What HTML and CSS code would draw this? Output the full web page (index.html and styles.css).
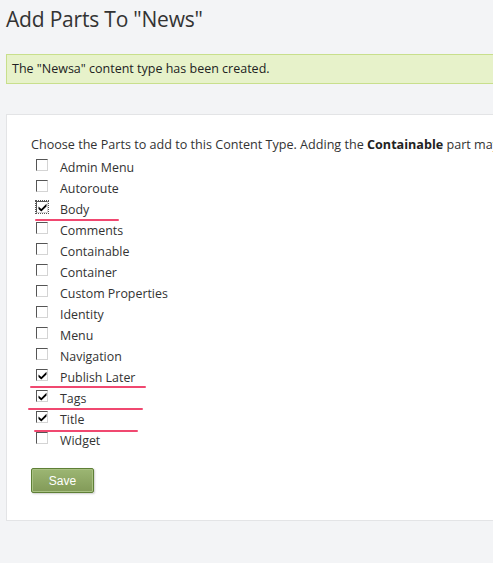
FILE: index.html
```html
<!DOCTYPE html>
<html>
<head>
<meta charset="utf-8">
<link rel="stylesheet" href="styles.css">
</head>
<body>
<div class="page">
  <h1 class="title">Add Parts To "News"</h1>
  <div class="message">The "Newsa" content type has been created.</div>
  <div class="panel">
    <p class="intro">Choose the Parts to add to this Content Type. Adding the <b>Containable</b> part may allow items to be contained.</p>
    <ul class="parts">
      <li class="part"><span class="cb"></span><span class="lbl">Admin Menu</span></li>
      <li class="part"><span class="cb"></span><span class="lbl">Autoroute</span></li>
      <li class="part"><span class="cb checked focus"><svg viewBox="0 0 9 9" class="tick"><path d="M0.5 3.5 L3.3 6 L8.5 0.8 L8.5 3.6 L3.3 8.6 L0.5 6 Z" fill="#000"/></svg></span><span class="lbl">Body</span><span class="mark m-body"></span></li>
      <li class="part"><span class="cb"></span><span class="lbl">Comments</span></li>
      <li class="part"><span class="cb"></span><span class="lbl">Containable</span></li>
      <li class="part"><span class="cb"></span><span class="lbl">Container</span></li>
      <li class="part"><span class="cb"></span><span class="lbl">Custom Properties</span></li>
      <li class="part"><span class="cb"></span><span class="lbl">Identity</span></li>
      <li class="part"><span class="cb"></span><span class="lbl">Menu</span></li>
      <li class="part"><span class="cb"></span><span class="lbl">Navigation</span></li>
      <li class="part"><span class="cb checked"><svg viewBox="0 0 9 9" class="tick"><path d="M0.5 3.5 L3.3 6 L8.5 0.8 L8.5 3.6 L3.3 8.6 L0.5 6 Z" fill="#000"/></svg></span><span class="lbl">Publish Later</span><span class="mark m-publish"></span></li>
      <li class="part"><span class="cb checked"><svg viewBox="0 0 9 9" class="tick"><path d="M0.5 3.5 L3.3 6 L8.5 0.8 L8.5 3.6 L3.3 8.6 L0.5 6 Z" fill="#000"/></svg></span><span class="lbl">Tags</span><span class="mark m-tags"></span></li>
      <li class="part"><span class="cb checked"><svg viewBox="0 0 9 9" class="tick"><path d="M0.5 3.5 L3.3 6 L8.5 0.8 L8.5 3.6 L3.3 8.6 L0.5 6 Z" fill="#000"/></svg></span><span class="lbl">Title</span><span class="mark m-title"></span></li>
      <li class="part"><span class="cb"></span><span class="lbl">Widget</span></li>
    </ul>
    <button class="save">Save</button>
  </div>
</div>
</body>
</html>
```
FILE: styles.css
```css
html, body {
  margin: 0;
  padding: 0;
  background: #f3f4f6;
  overflow: hidden;
}
body {
  font-family: "Open Sans", "Noto Sans", sans-serif;
  color: #333;
  width: 493px;
  height: 563px;
}
.page {
  padding: 0 0 0 6px;
  width: 487px;
}
.title {
  margin: 0;
  padding-top: 4px;
  height: 50px;
  font-weight: normal;
  font-size: 21px;
  line-height: 30px;
  color: #333;
  letter-spacing: -0.2px;
}
.message {
  box-sizing: border-box;
  height: 30px;
  border: 1px solid #c8df8c;
  border-right: none;
  background: #e7f2ca;
  font-size: 12.5px;
  line-height: 28px;
  padding-left: 5px;
  color: #222;
}
.panel {
  margin-top: 30px;
  box-sizing: border-box;
  height: 407px;
  background: #fff;
  border: 1px solid #e3e4e6;
  border-right: none;
  padding: 21px 0 0 24px;
  overflow: hidden;
}
.intro {
  margin: 0;
  font-size: 12.6px;
  line-height: 18px;
  white-space: nowrap;
  color: #333;
}
.intro b { color: #222; }
.parts {
  list-style: none;
  margin: 3px 0 0 0;
  padding: 0;
}
.part {
  position: relative;
  display: flex;
  align-items: center;
  height: 21px;
  font-size: 12.4px;
}
.cb {
  box-sizing: border-box;
  width: 12px;
  height: 12px;
  margin: -5px 0 0 5px;
  border-top: 1px solid #555;
  border-left: 1px solid #555;
  border-right: 1px solid #d4d4d4;
  border-bottom: 1px solid #d4d4d4;
  background: #fff;
  display: flex;
  align-items: center;
  justify-content: center;
}
.cb.focus { outline: 1px dotted #555; outline-offset: 0; }
.tick { width: 9px; height: 9px; }
.lbl {
  margin-left: 12px;
  color: #333;
}
.mark {
  position: absolute;
  height: 2px;
  background: #f04870;
  border-radius: 1px;
  top: 19px;
}
.m-body { left: 4px; width: 84px; top: 20px; }
.m-publish { left: -1px; width: 116px; top: 19px; }
.m-tags { left: -3px; width: 115px; top: 20px; }
.m-title { left: 3px; width: 104px; top: 21px; }
.save {
  margin-top: 17px;
  width: 63px;
  height: 25px;
  border: 1px solid #5e7f36;
  border-radius: 2px;
  background: linear-gradient(#9cb673, #829a58);
  box-shadow: inset 0 0 0 1px #a9c183, 1px 1px 2px rgba(0,0,0,0.2);
  color: #fff;
  font-family: "Liberation Sans", Arial, sans-serif;
  font-size: 12px;
  padding: 0;
}
```
